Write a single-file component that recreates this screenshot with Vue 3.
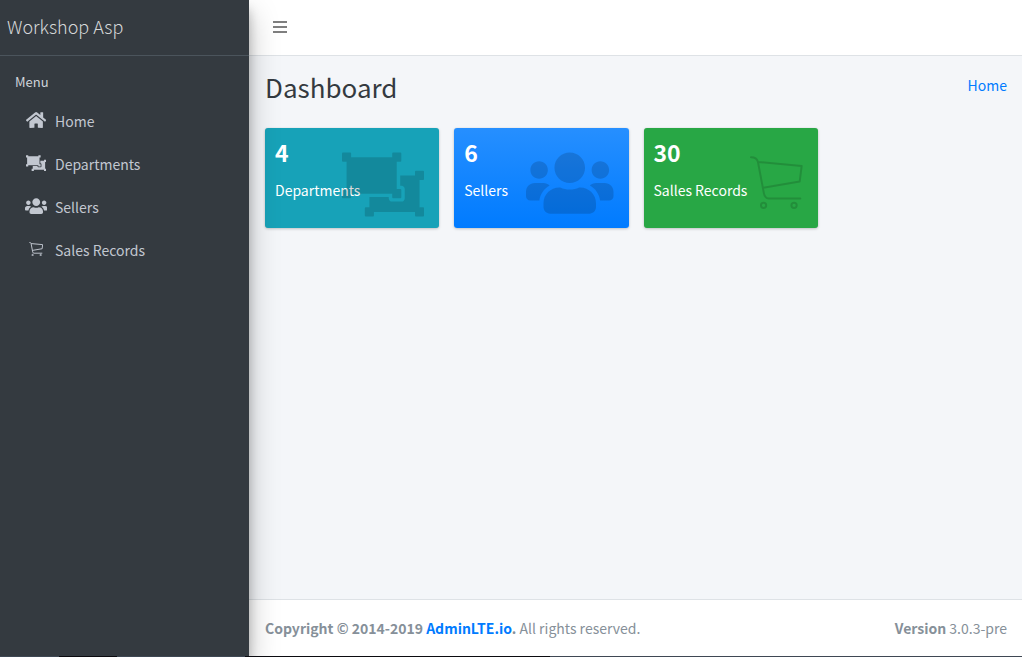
<script setup>
const icons = {
  home: {
    box: '0 0 576 512',
    d: 'M280.37 148.26L96 300.11V464a16 16 0 0 0 16 16l112.06-.29a16 16 0 0 0 15.92-16V368a16 16 0 0 1 16-16h64a16 16 0 0 1 16 16v95.64a16 16 0 0 0 16 16.05L464 480a16 16 0 0 0 16-16V300L295.67 148.26a12.19 12.19 0 0 0-15.3 0zM571.6 251.47L488 182.56V44.05a12 12 0 0 0-12-12h-56a12 12 0 0 0-12 12v72.61L318.47 43a48 48 0 0 0-61 0L4.34 251.47a12 12 0 0 0-1.6 16.9l25.5 31A12 12 0 0 0 45.15 301l235.22-193.74a12.19 12.19 0 0 1 15.3 0L530.9 301a12 12 0 0 0 16.9-1.6l25.5-31a12 12 0 0 0-1.7-16.93z'
  },
  departments: {
    box: '0 0 576 512',
    d: 'M64 320v26a6 6 0 0 1-6 6H6a6 6 0 0 1-6-6v-52a6 6 0 0 1 6-6h26V96H6a6 6 0 0 1-6-6V38a6 6 0 0 1 6-6h52a6 6 0 0 1 6 6v26h288V38a6 6 0 0 1 6-6h52a6 6 0 0 1 6 6v52a6 6 0 0 1-6 6h-26v192h26a6 6 0 0 1 6 6v52a6 6 0 0 1-6 6h-52a6 6 0 0 1-6-6v-26H64zm480-64v-32h26a6 6 0 0 0 6-6v-52a6 6 0 0 0-6-6h-52a6 6 0 0 0-6 6v26H408v72h8c13.255 0 24 10.745 24 24v64c0 13.255-10.745 24-24 24h-64c-13.255 0-24-10.745-24-24v-8H192v72h-26a6 6 0 0 0-6 6v52a6 6 0 0 0 6 6h52a6 6 0 0 0 6-6v-26h288v26a6 6 0 0 0 6 6h52a6 6 0 0 0 6-6v-52a6 6 0 0 0-6-6h-26V256z'
  },
  sellers: {
    box: '0 0 640 512',
    d: 'M96 224c35.3 0 64-28.7 64-64s-28.7-64-64-64-64 28.7-64 64 28.7 64 64 64zm448 0c35.3 0 64-28.7 64-64s-28.7-64-64-64-64 28.7-64 64 28.7 64 64 64zm32 32h-64c-17.6 0-33.5 7.1-45.1 18.6 40.3 22.1 68.9 62 75.1 109.4h66c17.7 0 32-14.3 32-32v-32c0-35.3-28.7-64-64-64zm-256 0c61.9 0 112-50.1 112-112S381.9 32 320 32 208 82.1 208 144s50.1 112 112 112zm76.8 32h-8.3c-20.8 10-43.9 16-68.5 16s-47.6-6-68.5-16h-8.3C179.6 288 128 339.6 128 403.2V432c0 26.5 21.5 48 48 48h288c26.5 0 48-21.5 48-48v-28.8c0-63.6-51.6-115.2-115.2-115.2zm-223.7-13.4C161.5 263.1 145.6 256 128 256H64c-35.3 0-64 28.7-64 64v32c0 17.7 14.3 32 32 32h65.9c6.3-47.4 34.9-87.3 75.2-109.4z'
  },
  sales: {
    box: '0 0 160 160',
    line: 'M3 4C14 4 21 6 24 18L156 30L150 77L40 96M24 18L42 113Q45 128 56 128H152M49 149a8 8 0 1 1-16 0a8 8 0 1 1 16 0M141 149a8 8 0 1 1-16 0a8 8 0 1 1 16 0'
  }
}

const menu = [
  { label: 'Home', icon: 'home' },
  { label: 'Departments', icon: 'departments' },
  { label: 'Sellers', icon: 'sellers' },
  { label: 'Sales Records', icon: 'sales' }
]

const cards = [
  { value: 4, label: 'Departments', icon: 'departments' },
  { value: 6, label: 'Sellers', icon: 'sellers' },
  { value: 30, label: 'Salles Records', icon: 'sales' }
]
</script>

<template>
  <div class="wrapper">
    <aside class="sidebar">
      <a class="brand" href="#">Workshop Asp</a>
      <nav class="menu" aria-label="Menu">
        <div class="menu-title">Menu</div>
        <a v-for="item in menu" :key="item.icon" class="menu-link" href="#">
          <span class="menu-icon">
            <svg :class="item.icon" :viewBox="icons[item.icon].box" aria-hidden="true">
              <path v-if="icons[item.icon].d" :d="icons[item.icon].d" fill="currentColor" />
              <path v-else :d="icons[item.icon].line" fill="none" stroke="currentColor" stroke-width="11" />
            </svg>
          </span>
          <span class="menu-label">{{ item.label }}</span>
        </a>
      </nav>
    </aside>

    <div class="page">
      <header class="navbar">
        <button class="toggle" type="button" aria-label="Toggle menu">
          <svg viewBox="0 0 14 12" aria-hidden="true">
            <path d="M0 0h14v2H0zM0 5h14v2H0zM0 10h14v2H0z" fill="currentColor" />
          </svg>
        </button>
      </header>

      <main class="content">
        <div class="heading">
          <h1>Dashboard</h1>
          <a href="#">Home</a>
        </div>
        <div class="cards">
          <section v-for="card in cards" :key="card.icon" class="card" :class="'card-' + card.icon">
            <h3>{{ card.value }}</h3>
            <p>{{ card.label }}</p>
            <svg class="card-icon" :class="card.icon" :viewBox="icons[card.icon].box" aria-hidden="true">
              <path v-if="icons[card.icon].d" :d="icons[card.icon].d" fill="currentColor" />
              <path
                v-else
                :d="icons[card.icon].line"
                fill="none"
                stroke="currentColor"
                stroke-width="6"
                stroke-linejoin="round"
                stroke-linecap="round"
              />
            </svg>
          </section>
        </div>
      </main>

      <footer class="footer">
        <div><strong>Copyright © 2014-2019 <a href="#">AdminLTE.io</a>.</strong> All rights reserved.</div>
        <div><strong>Version</strong> 3.0.3-pre</div>
      </footer>
    </div>
    <div class="bottom-edge"></div>
  </div>
</template>

<style>
body {
  margin: 0;
}
</style>

<style scoped>
.wrapper {
  display: grid;
  grid-template-columns: 249px 1fr;
  grid-template-rows: 1fr 1px;
  min-height: 100vh;
  font-family: "Noto Sans CJK SC", "Noto Sans", sans-serif;
  font-size: 14px;
  line-height: 24px;
  color: #343a40;
}

.wrapper * {
  box-sizing: border-box;
}

a {
  color: #007bff;
  text-decoration: none;
}

.sidebar {
  z-index: 1;
  background: #343a40;
  box-shadow: 0 14px 28px rgba(0, 0, 0, 0.25), 0 10px 10px rgba(0, 0, 0, 0.22);
  clip-path: inset(0 -60px 0 0);
}

.brand {
  display: block;
  height: 56px;
  padding: 0 7px;
  border-bottom: 1px solid #4b545c;
  font-size: 18px;
  font-weight: 300;
  line-height: 53px;
  color: #d6d8d9;
}

.menu {
  padding: 14px 8px;
}

.menu-title {
  padding: 0 7px;
  margin-bottom: 4px;
  font-size: 13px;
  color: #d0d4db;
}

.menu-link {
  display: flex;
  align-items: center;
  gap: 6px;
  height: 43px;
  padding: 0 15px;
  color: #c2c7d0;
}

.menu-icon {
  display: flex;
  align-items: center;
  justify-content: center;
  width: 26px;
}

.menu-label {
  padding-top: 2px;
}

.menu-icon svg {
  display: block;
  height: 18px;
}

.menu-icon svg.sales {
  height: 14px;
}

.page {
  display: flex;
  flex-direction: column;
  min-width: 0;
}

.navbar {
  display: flex;
  align-items: center;
  height: 56px;
  padding: 0 8px 2px;
  background: #fff;
  border-bottom: 1px solid #dee2e6;
}

.toggle {
  padding: 8px 16px;
  border: 0;
  background: none;
  color: #7f7f7f;
}

.toggle svg {
  display: block;
  width: 14px;
  height: 12px;
}

.content {
  flex: 1;
  padding: 14px 15px 14px 16px;
  background: #f4f6f9;
}

.heading {
  display: flex;
  justify-content: space-between;
  margin-bottom: 24px;
}

.heading h1 {
  margin: 0;
  font-size: 26px;
  font-weight: 400;
  line-height: 34px;
}

.heading a {
  padding: 3px 0;
}

.cards {
  display: grid;
  grid-template-columns: repeat(4, 1fr);
  gap: 15px;
}

.card {
  position: relative;
  height: 100px;
  padding: 10px;
  border-radius: 3px;
  color: #fff;
  box-shadow: 0 0 1px rgba(0, 0, 0, 0.13), 0 1px 3px rgba(0, 0, 0, 0.2);
}

.card-departments {
  background: #17a2b8;
}

.card-sellers {
  background: linear-gradient(#268fff, #007bff);
}

.card-sales {
  background: #28a745;
}

.card h3 {
  margin: 0 0 12px;
  font-size: 23px;
  font-weight: 700;
  line-height: 28px;
}

.card p {
  margin: 0;
}

.card-icon {
  position: absolute;
  top: 20px;
  right: 15px;
  height: 70px;
  color: rgba(0, 0, 0, 0.15);
}

.card-icon.departments {
  height: 73px;
}

.card-icon.sales {
  top: 28px;
  height: 53px;
}

.footer {
  display: flex;
  justify-content: space-between;
  padding: 16px 15px 16px 16px;
  background: #fff;
  border-top: 1px solid #dee2e6;
  color: #869099;
}

.bottom-edge {
  grid-column: 1 / -1;
  background: linear-gradient(to right, #3f4854 59px, #0b0b10 59px 117px, #3f4854 117px 245px, #0b0b10 245px 550px, #3f4854 550px);
}
</style>
